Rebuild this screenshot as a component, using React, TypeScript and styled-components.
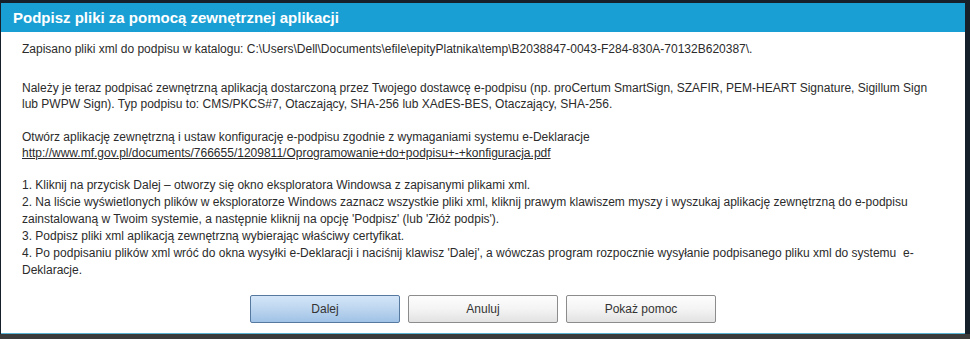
import React from "react";
import styled, { createGlobalStyle, css } from "styled-components";

const GlobalStyle = createGlobalStyle`
  html, body {
    margin: 0;
    padding: 0;
    background: #3b3b3b;
  }
  body {
    font-family: "Liberation Sans", Arial, sans-serif;
  }
`;

const Screen = styled.div`
  width: 970px;
  height: 339px;
  box-sizing: border-box;
  padding: 3px 5px 0 1px;
  background: linear-gradient(#15202a 0, #15202a 334px, #3b3b3b 334px);
  overflow: hidden;
`;

const Dialog = styled.div`
  width: 964px;
  box-sizing: border-box;
  background: #ffffff;
  border-bottom: 1px solid #5ab3d3;
  display: flex;
  flex-direction: column;
`;

const TitleBar = styled.div`
  height: 29px;
  display: flex;
  align-items: center;
  padding-left: 12px;
  background: #1a9fd5;
  color: #ffffff;
  font-size: 15px;
  font-weight: bold;
`;

const Body = styled.div`
  padding: 9px 24px 0 21px;
  color: #2b2b2b;
  font-size: 12px;
  line-height: 16px;
`;

const Paragraph = styled.p<{ $gap?: number }>`
  margin: 0 0 ${({ $gap }) => $gap ?? 17}px 0;
`;

const Steps = styled.div`
  line-height: 17px;
`;

const DocLink = styled.a`
  color: #2b2b2b;
  text-decoration: underline;
`;

const ButtonRow = styled.div`
  display: flex;
  justify-content: center;
  gap: 8px;
  padding: 16px 0 10px;
`;

const Button = styled.button<{ $primary?: boolean }>`
  width: 150px;
  height: 28px;
  box-sizing: border-box;
  border-radius: 2px;
  font-family: "Liberation Sans", Arial, sans-serif;
  font-size: 12px;
  color: #333333;
  border: 1px solid #8c8c8c;
  background: linear-gradient(#fdfdfd, #f4f4f4 50%, #e2e2e2);
  cursor: pointer;

  ${({ $primary }) =>
    $primary &&
    css`
      border-color: #56799f;
      background: linear-gradient(#d4e6f8, #bcd5ef 50%, #a0c2e6);
    `}
`;

const App = () => {
  return (
    <>
      <GlobalStyle />
      <Screen>
        <Dialog>
          <TitleBar>Podpisz pliki za pomocą zewnętrznej aplikacji</TitleBar>
          <Body>
            <Paragraph $gap={23}>
              Zapisano pliki xml do podpisu w katalogu:
              C:\Users\Dell\Documents\efile\epityPlatnika\temp\B2038847-0043-F284-830A-70132B620387\.
            </Paragraph>
            <Paragraph $gap={17}>
              Należy je teraz podpisać zewnętrzną aplikacją dostarczoną przez
              Twojego dostawcę e-podpisu (np. proCertum SmartSign, SZAFIR,
              PEM-HEART Signature, Sigillum Sign
              <br />
              lub PWPW Sign). Typ podpisu to: CMS/PKCS#7, Otaczający, SHA-256
              lub XAdES-BES, Otaczający, SHA-256.
            </Paragraph>
            <Paragraph $gap={16}>
              Otwórz aplikację zewnętrzną i ustaw konfigurację e-podpisu
              zgodnie z wymaganiami systemu e-Deklaracje
              <br />
              <DocLink href="#">
                http://www.mf.gov.pl/documents/766655/1209811/Oprogramowanie+do+podpisu+-+konfiguracja.pdf
              </DocLink>
            </Paragraph>
            <Steps>
              1. Kliknij na przycisk Dalej – otworzy się okno eksploratora
              Windowsa z zapisanymi plikami xml.
              <br />
              2. Na liście wyświetlonych plików w eksploratorze Windows zaznacz
              wszystkie pliki xml, kliknij prawym klawiszem myszy i wyszukaj
              aplikację zewnętrzną do e-podpisu
              <br />
              zainstalowaną w Twoim systemie, a następnie kliknij na opcję
              'Podpisz' (lub 'Złóż podpis').
              <br />
              3. Podpisz pliki xml aplikacją zewnętrzną wybierając właściwy
              certyfikat.
              <br />
              4. Po podpisaniu plików xml wróć do okna wysyłki e-Deklaracji i
              naciśnij klawisz 'Dalej', a wówczas program rozpocznie wysyłanie
              podpisanego pliku xml do systemu&nbsp; e-
              <br />
              Deklaracje.
            </Steps>
          </Body>
          <ButtonRow>
            <Button $primary>Dalej</Button>
            <Button>Anuluj</Button>
            <Button>Pokaż pomoc</Button>
          </ButtonRow>
        </Dialog>
      </Screen>
    </>
  );
};

export default App;
